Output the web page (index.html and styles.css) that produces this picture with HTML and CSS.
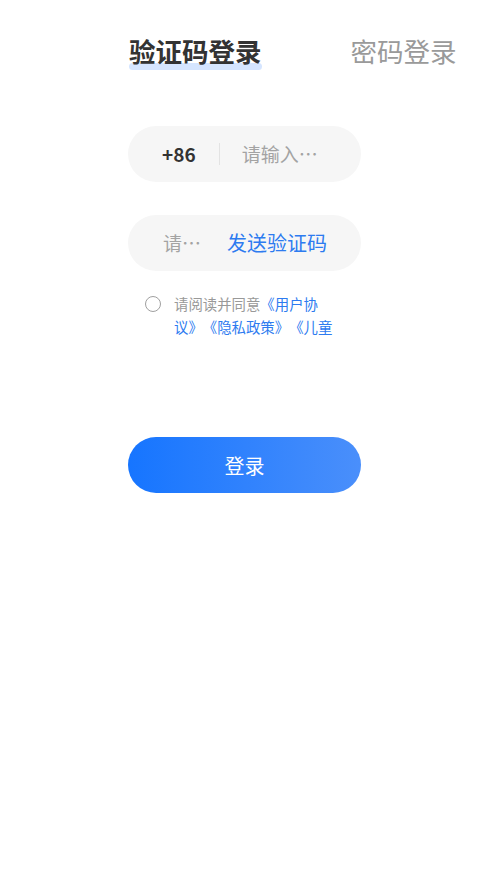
FILE: index.html
```html
<!DOCTYPE html>
<html lang="zh-CN">
<head>
<meta charset="utf-8">
<title>登录</title>
<link rel="stylesheet" href="styles.css">
</head>
<body>
<div class="page">
  <div class="tabs">
    <span class="tab tab-active">验证码登录</span>
    <span class="tab">密码登录</span>
  </div>
  <div class="form">
    <div class="field">
      <span class="code">+86</span>
      <span class="divider"></span>
      <span class="ph ph-phone">请输入手机号</span>
    </div>
    <div class="field field-sms">
      <span class="ph ph-sms">请输入验证码</span>
      <span class="send">发送验证码</span>
    </div>
    <div class="agree">
      <span class="radio"></span>
      <p class="agree-text">请阅读并同意<span class="link">《用户协议》</span><span class="link">《隐私政策》</span><span class="link">《儿童隐私保护指引》</span></p>
    </div>
    <div class="btn">登录</div>
  </div>
</div>
</body>
</html>
```

FILE: styles.css
```css
html, body {
  margin: 0;
  padding: 0;
  background: #ffffff;
}
body {
  font-family: "Noto Sans CJK SC", "Noto Sans", sans-serif;
  color: #333333;
  text-spacing-trim: space-all;
}
.page {
  width: 497px;
  min-height: 883px;
}
.tabs {
  display: flex;
  align-items: center;
  gap: 89px;
  padding-left: 129px;
  padding-top: 34px;
  height: 34px;
}
.tab {
  position: relative;
  font-size: 26.5px;
  line-height: 34px;
  color: #9a9a9a;
  white-space: nowrap;
}
.tab-active {
  color: #333333;
  font-weight: 700;
  z-index: 0;
}
.tab-active::after {
  content: "";
  position: absolute;
  left: 0;
  right: 0;
  bottom: -2px;
  height: 7px;
  border-radius: 4px;
  background: #d5e5ff;
  z-index: -1;
}
.form {
  margin-left: 128px;
  width: 233px;
  padding-top: 58px;
}
.field {
  display: flex;
  align-items: center;
  height: 56px;
  border-radius: 28px;
  background: #f6f6f6;
  padding-left: 34px;
  box-sizing: border-box;
}
.code {
  font-size: 19px;
  font-weight: 700;
  color: #333333;
  line-height: 24px;
}
.divider {
  width: 1px;
  height: 22px;
  background: #e3e3e3;
  margin-left: 23px;
  margin-right: 22px;
}
.ph {
  font-size: 19px;
  line-height: 26px;
  color: #a3a3a3;
  white-space: nowrap;
  overflow: hidden;
  text-overflow: ellipsis;
}
.ph-phone {
  width: 82px;
}
.field-sms {
  margin-top: 33px;
  padding-left: 35px;
}
.ph-sms {
  width: 44px;
}
.send {
  margin-left: 20px;
  font-size: 20px;
  line-height: 26px;
  color: #2d7bf0;
  white-space: nowrap;
}
.agree {
  display: flex;
  align-items: flex-start;
  margin-top: 21px;
  padding-left: 17px;
}
.radio {
  flex: none;
  width: 14px;
  height: 14px;
  border: 1.5px solid #a0a0a0;
  border-radius: 50%;
  margin-top: 4px;
}
.agree-text {
  margin: 0 0 0 13px;
  width: 160px;
  font-size: 14.4px;
  line-height: 23px;
  color: #999999;
  max-height: 46px;
  overflow: hidden;
}
.link {
  color: #2d7bf0;
}
.btn {
  margin-top: 99px;
  height: 56px;
  border-radius: 28px;
  background: linear-gradient(90deg, #1675ff 0%, #4a8ffb 100%);
  color: #ffffff;
  font-size: 20px;
  display: flex;
  align-items: center;
  justify-content: center;
}
```
